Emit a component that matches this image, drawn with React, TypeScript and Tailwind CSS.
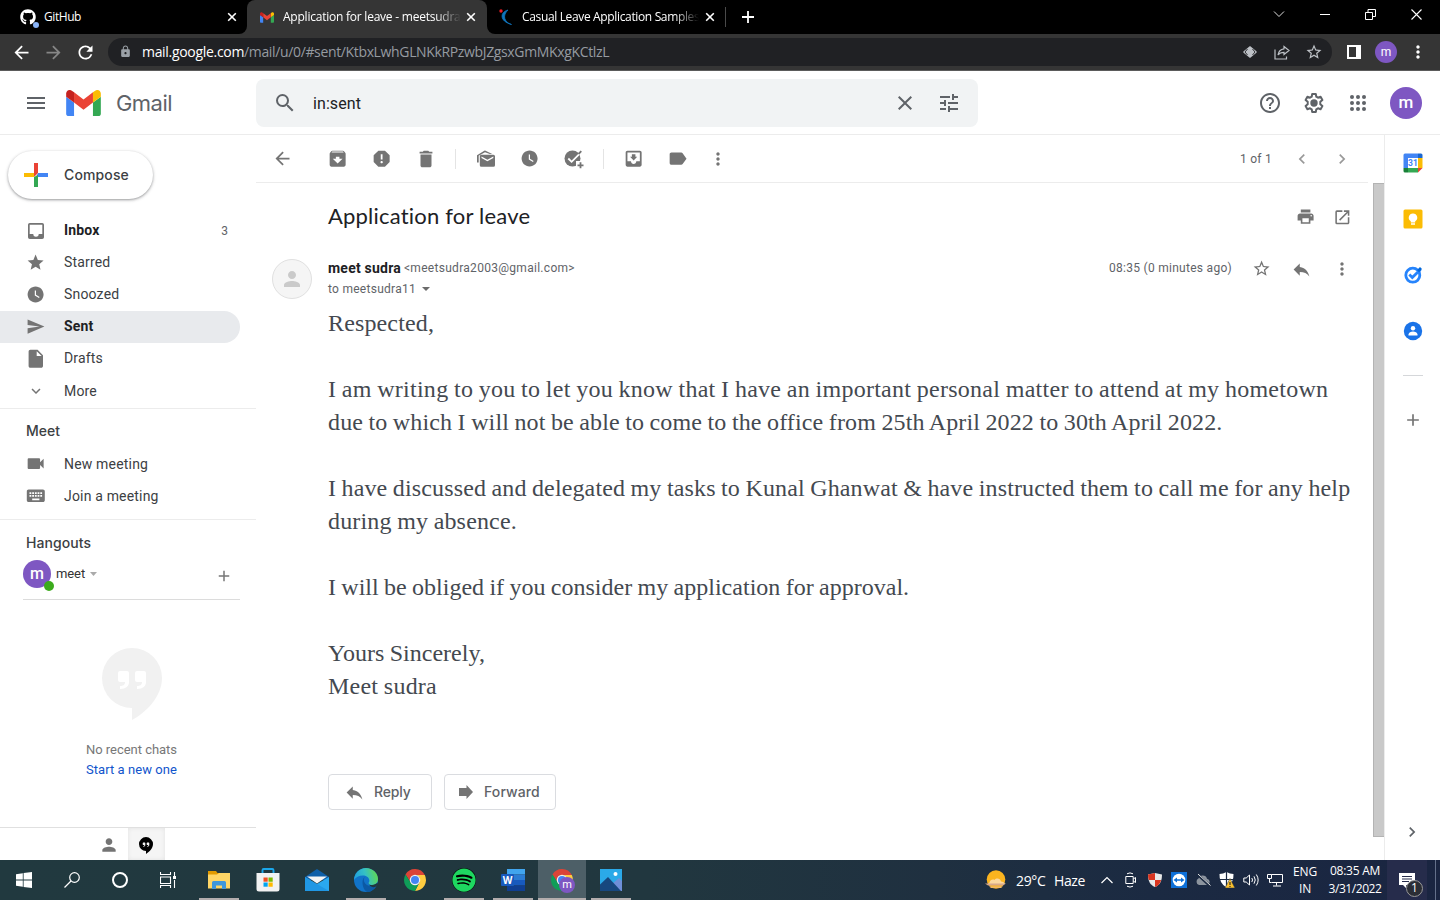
import type { ReactNode } from "react";
import {
  MdAdd, MdArchive, MdArrowBack, MdArrowDropDown, MdArrowForward, MdChevronLeft, MdChevronRight,
  MdClose, MdDelete, MdExpandMore, MdHelpOutline, MdInsertDriveFile, MdKeyboard, MdLabel, MdLock,
  MdMenu, MdMoreVert, MdMoveToInbox, MdOpenInNew, MdPerson, MdPrint, MdRefresh, MdReply, MdReport,
  MdSearch, MdSend, MdStar, MdStarBorder, MdTune, MdVideocam, MdWatchLater,
} from "react-icons/md";
import { FaGithub, FaSpotify } from "react-icons/fa";

const SEGOE = "font-['Open_Sans','Noto_Sans',sans-serif]";
const ROBOTO = "font-['Roboto',sans-serif]";
const PRODUCT = "font-['Inter',sans-serif]";

function Cell({ className = "", children }: { className?: string; children?: ReactNode }) {
  return <div className={`flex shrink-0 items-center justify-center ${className}`}>{children}</div>;
}

function GmailLogo({ className }: { className: string }) {
  return (
    <svg viewBox="52 42 88 66" className={className}>
      <path fill="#4285f4" d="M58 108h14V74L52 59v43c0 3.32 2.69 6 6 6" />
      <path fill="#34a853" d="M120 108h14c3.32 0 6-2.69 6-6V59l-20 15" />
      <path fill="#fbbc04" d="M120 48v26l20-15v-8c0-7.42-8.47-11.65-14.4-7.2" />
      <path fill="#ea4335" d="M72 74V48l24 18 24-18v26L96 92" />
      <path fill="#c5221f" d="M52 51v8l20 15V48l-5.6-4.2c-5.94-4.45-14.4-.22-14.4 7.2" />
    </svg>
  );
}

function ChromeLogo({ className }: { className: string }) {
  return (
    <svg viewBox="0 0 48 48" className={className}>
      <path fill="#db4437" d="M4.95 13A22 22 0 0 1 43.6 14H24A10 10 0 0 0 15.34 29Z" />
      <path fill="#ffcd40" d="M43.6 14A22 22 0 0 1 24 46L32.66 29A10 10 0 0 0 24 14Z" />
      <path fill="#0f9d58" d="M24 46A22 22 0 0 1 4.95 13L15.34 29A10 10 0 0 0 32.66 29Z" />
      <circle cx="24" cy="24" r="10.5" fill="#f1f1f1" />
      <circle cx="24" cy="24" r="8" fill="#4285f4" />
    </svg>
  );
}

function HangoutsMark({ className, fill, quote }: { className: string; fill: string; quote: string }) {
  return (
    <svg viewBox="0 0 60 72" className={className}>
      <path fill={fill} d="M30 0a30 30 0 1 0 0 60v12c15-8 30-24 30-42A30 30 0 0 0 30 0z" />
      <path fill={quote} d="M18 23h7a2 2 0 0 1 2 2v9c0 4-3 7-9 7v-3c3 0 5-1 5-4h-5a2 2 0 0 1-2-2v-7a2 2 0 0 1 2-2zM35 23h7a2 2 0 0 1 2 2v9c0 4-3 7-9 7v-3c3 0 5-1 5-4h-5a2 2 0 0 1-2-2v-7a2 2 0 0 1 2-2z" />
    </svg>
  );
}

function TabClose() {
  return (
    <svg viewBox="0 0 10 10" className="size-[10px] shrink-0">
      <path d="M1.2 1.2l7.6 7.6M8.8 1.2l-7.6 7.6" stroke="#fff" strokeWidth="1.6" />
    </svg>
  );
}

function TabStrip() {
  return (
    <div className={`flex h-[34px] bg-black text-[12px] leading-[34px] text-white ${SEGOE}`}>
      <div className="flex w-[239px] items-center pl-5 pr-[2px]">
        <div className="relative mr-2 size-4">
          <FaGithub className="size-4" />
          <span className="absolute left-[13px] top-[13px] size-[6px] rounded-full bg-[#8ab4f8]" />
        </div>
        <span className="flex-1 tracking-[-0.43px]">GitHub</span>
        <TabClose />
      </div>
      <div className="flex w-2 items-end">
        <div className="size-2 bg-[#353535]">
          <div className="size-2 rounded-br-lg bg-black" />
        </div>
      </div>
      <div className="flex w-[240px] items-center rounded-t-lg bg-[#353535] pl-[13px] pr-[11px]">
        <GmailLogo className="mr-[9px] h-[11px] w-[14px] shrink-0" />
        <span className="mr-[3px] w-[180px] whitespace-nowrap tracking-[-0.23px] [mask-image:linear-gradient(to_right,#000_152px,transparent_178px)]">
          Application for leave - meetsudra
        </span>
        <TabClose />
      </div>
      <div className="flex w-2 items-end">
        <div className="size-2 bg-[#353535]">
          <div className="size-2 rounded-bl-lg bg-black" />
        </div>
      </div>
      <div className="flex w-[231px] items-center pl-1">
        <svg viewBox="0 0 14 16" className="mr-[9px] h-4 w-[14px] shrink-0">
          <path d="M9 1C1 3 0 12 12.500 15.500C4.500 13 3.500 6 9 1z" fill="#0f75bd" stroke="#0f75bd" strokeWidth=".8" />
          <circle cx="2" cy="2" r="1.700" fill="#ed1c24" />
        </svg>
        <span className="mr-[3px] w-[180px] whitespace-nowrap tracking-[-0.35px] [mask-image:linear-gradient(to_right,#000_152px,transparent_177px)]">
          Casual Leave Application Samples
        </span>
        <TabClose />
        <div className="ml-[10px] h-5 w-px shrink-0 bg-[#4a4a4a]" />
      </div>
      <Cell className="w-[44px]">
        <svg viewBox="0 0 12 12" className="size-3">
          <path d="M6 0v12M0 6h12" stroke="#fff" strokeWidth="1.8" />
        </svg>
      </Cell>
      <div className="flex-1" />
      <Cell className="h-7 w-[46px]">
        <svg viewBox="0 0 12 12" className="size-3" fill="none" stroke="#ddd"><path d="M1 3.500l5 5 5-5" /></svg>
      </Cell>
      <Cell className="h-7 w-[46px]">
        <div className="h-px w-[10px] bg-white" />
      </Cell>
      <Cell className="h-7 w-[46px] pr-px">
        <svg viewBox="0 0 11 11" className="size-[11px]" fill="none" stroke="#fff"><path d="M.5 3.500h7v7h-7zM3 3.500V.5h7.500v7H8" /></svg>
      </Cell>
      <Cell className="h-7 w-[46px] pr-px">
        <svg viewBox="0 0 11 11" className="size-[11px]" fill="none" stroke="#fff" strokeWidth="1.100"><path d="M.5.5l10 10M10.500.5l-10 10" /></svg>
      </Cell>
    </div>
  );
}

function AddressBar() {
  return (
    <div className="flex h-[37px] items-center border-b border-[#5b5b5b] bg-[#353535] pl-[6px] text-white">
      <Cell className="w-8 pr-px"><MdArrowBack className="size-[21px]" /></Cell>
      <Cell className="w-8 pr-px text-[#868686]"><MdArrowForward className="size-[21px]" /></Cell>
      <Cell className="mr-[6px] w-8 pr-px"><MdRefresh className="size-[21px]" /></Cell>
      <div className="flex h-7 w-[1224px] items-center rounded-full bg-[#202124] pl-[10px] pr-[2px] text-[#bdc1c6]">
        <Cell className="mr-2 w-4 pb-px pr-px"><MdLock className="size-[13px] text-[#9aa0a6]" /></Cell>
        <span className={`flex-1 text-[14px] leading-7 tracking-[-0.355px] text-[#969ba1] ${SEGOE}`}>
          <span className="tracking-[-0.31px] text-white">mail.google.com</span>/mail/u/0/#sent/KtbxLwhGLNKkRPzwbJZgsxGmMKxgKCtlzL
        </span>
        <Cell className="w-8">
          <svg viewBox="0 0 14 12" className="h-3 w-[14px]" fill="#bdc1c6">
            <path d="M7 0l5.500 4.500L14 6l-1.500 1.500L7 12 1.500 7.500 0 6l1.500-1.500z" />
            <path d="M4.500 3L2 6l2.500 3M9.500 3L12 6 9.500 9" fill="none" stroke="#202124" strokeWidth=".9" />
          </svg>
        </Cell>
        <Cell className="w-8">
          <svg viewBox="0 0 16 15" className="h-[15px] w-4" fill="none" stroke="#bdc1c6" strokeWidth="1.200">
            <path d="M1 4.500v9.500h11.500v-2.500M10 1.500l5 4-5 4V7.300c-3 0-4.600.8-6 2.700.5-3.500 2.500-5.800 6-6.200z" />
          </svg>
        </Cell>
        <Cell className="w-8"><MdStarBorder className="size-[18px]" /></Cell>
      </div>
      <Cell className="ml-[6px] w-8">
        <div className="h-[14px] w-[14px] border-2 border-r-[5px] border-white" />
      </Cell>
      <Cell className="w-8">
        <div className={`flex size-[22px] items-center justify-center rounded-full bg-[#7e57c2] pb-px text-[12px] leading-none ${ROBOTO}`}>m</div>
      </Cell>
      <Cell className="w-8"><MdMoreVert className="size-5" /></Cell>
    </div>
  );
}

function GmailHeader() {
  return (
    <div className="flex h-16 items-center border-b border-[#ececec] text-[#5f6368]">
      <Cell className="ml-3 w-12"><MdMenu className="size-6" /></Cell>
      <GmailLogo className="ml-[6px] mr-[15px] h-[26px] w-[35px]" />
      <span className={`w-[140px] pt-[2px] text-[22px] tracking-[-0.54px] ${PRODUCT}`}>Gmail</span>
      <div className="flex h-12 w-[722px] items-center rounded-lg bg-[#f1f3f4]">
        <Cell className="w-[57px]"><MdSearch className="size-6" /></Cell>
        <span className={`flex-1 pt-[2px] text-[16px] tracking-[0.08px] text-[#202124] ${ROBOTO}`}>in:sent</span>
        <Cell className="w-11"><MdClose className="size-6" /></Cell>
        <Cell className="mr-[7px] w-11"><MdTune className="size-6" /></Cell>
      </div>
      <Cell className="ml-[270px] w-11"><MdHelpOutline className="size-6" /></Cell>
      <Cell className="w-11">
        <svg viewBox="0 0 24 24" className="size-6">
          <path fill="none" stroke="#5f6368" strokeWidth="2" strokeLinejoin="round" d="M10.200 3h3.600l.5 2.700 1.700 1 2.600-.9 1.800 3.100-2.100 1.800v2.600l2.100 1.800-1.800 3.100-2.600-.9-1.700 1-.5 2.700h-3.600l-.5-2.700-1.700-1-2.600.9-1.800-3.100 2.100-1.800v-2.600L3.600 8.900l1.800-3.100 2.600.9 1.700-1z" />
          <circle cx="12" cy="12" r="3.700" fill="#5f6368" />
        </svg>
      </Cell>
      <Cell className="w-11">
        <svg viewBox="0 0 16 16" className="size-4" fill="#5f6368">
          {[2, 8, 14].map((y) => [2, 8, 14].map((x) => <circle key={`${x}-${y}`} cx={x} cy={y} r="2" />))}
        </svg>
      </Cell>
      <Cell className="ml-[10px] w-8">
        <div className={`flex size-8 items-center justify-center rounded-full bg-[#7e57c2] pb-px text-[17px] font-medium leading-none text-white ${ROBOTO}`}>m</div>
      </Cell>
    </div>
  );
}

function NavItem({ icon, label, count, active, bold, low }: { icon: ReactNode; label: string; count?: string; active?: boolean; bold?: boolean; low?: boolean }) {
  return (
    <div className={`mr-4 flex h-8 items-center rounded-r-full pl-[26px] pr-3 text-[14px] ${active ? "bg-[#e8eaed]" : ""} ${bold ? "font-bold text-[#202124]" : "text-[#3c4043]"}`}>
      <Cell className="mr-[18px] w-5 text-[#747474]">{icon}</Cell>
      <span className={`flex-1 leading-5 tracking-[0.18px] ${low ? "" : "pb-[2px]"}`}>{label}</span>
      {count && <span className="text-[12px] font-normal text-[#5f6368]">{count}</span>}
    </div>
  );
}

function Sidebar() {
  return (
    <div className={`flex w-64 flex-col ${ROBOTO}`}>
      <div className={`ml-2 mt-4 flex h-12 w-[145px] shrink-0 items-center rounded-full bg-white pl-4 text-[14px] font-medium tracking-[0.13px] text-[#3c4043] shadow-[0_1px_2px_rgba(60,64,67,.35),0_1px_3px_1px_rgba(60,64,67,.16)] ${PRODUCT}`}>
        <svg viewBox="0 0 24 24" className="mr-4 size-6">
          <path fill="#ea4335" d="M10 0h4v10l-4 4z" />
          <path fill="#fbbc04" d="M0 10h10v4H0z" />
          <path fill="#4285f4" d="M14 10h10v4H12z" />
          <path fill="#34a853" d="M10 14l4-2v12h-4z" />
        </svg>
        <span className="pb-[2px]">Compose</span>
      </div>
      <div className="mt-4">
        <NavItem bold label="Inbox" count="3" icon={
          <svg viewBox="0 0 16 16" className="size-4" fill="currentColor"><path fillRule="evenodd" d="M1.800 0h12.400A1.800 1.800 0 0 1 16 1.800v12.400a1.800 1.800 0 0 1-1.800 1.800H1.800A1.800 1.800 0 0 1 0 14.200V1.800A1.800 1.800 0 0 1 1.800 0zM1.700 1.700v9.300h3.600a2.700 2.700 0 0 0 5.400 0h3.600V1.700z" /></svg>
        } />
        <NavItem label="Starred" icon={<MdStar className="size-[19.2px]" />} />
        <NavItem label="Snoozed" icon={<MdWatchLater className="size-[19.2px]" />} />
        <NavItem bold active label="Sent" icon={<MdSend className="size-[19.2px]" />} />
        <NavItem label="Drafts" icon={<MdInsertDriveFile className="size-[21.6px] shrink-0" />} />
        <NavItem low label="More" icon={<MdExpandMore className="size-[18px]" />} />
      </div>
      <div className="mt-px border-t border-[#ececec] pt-3">
        <div className={`mb-[7px] pl-[26px] text-[14px] font-medium leading-5 text-[#3c4043] ${PRODUCT}`}>Meet</div>
        <NavItem low label="New meeting" icon={<MdVideocam className="size-[21.3px] shrink-0" />} />
        <NavItem low label="Join a meeting" icon={<MdKeyboard className="size-[21.6px] shrink-0" />} />
      </div>
      <div className="mt-[7px] border-t border-[#ececec] pt-[13px]">
        <div className={`pl-[26px] text-[14px] font-medium leading-5 tracking-[0.06px] text-[#3c4043] ${PRODUCT}`}>Hangouts</div>
        <div className="ml-[23px] mr-4 mt-[7px] flex h-10 items-start border-b border-[#dcdcdc]">
          <div className="relative flex size-7 items-center justify-center rounded-full bg-[#7e57c2] pb-px text-[16px] font-medium leading-none text-white">
            m
            <span className="absolute left-[21px] top-[21px] size-[10px] rounded-full bg-[#3cab1c]" />
          </div>
          <span className="ml-[5px] text-[13px] leading-7 tracking-[-0.1px] text-[#333]">meet</span>
          <svg viewBox="0 0 7 4" className="ml-[5px] mt-3 h-1 w-[7px]" fill="#aaa"><path d="M0 0h7L3.500 4z" /></svg>
          <div className="flex-1" />
          <MdAdd className="mr-[7px] mt-[7px] size-[18px] text-[#777]" />
        </div>
      </div>
      <div className="mt-12 flex flex-1 flex-col items-center">
        <HangoutsMark className="ml-[8px] h-[72px] w-[60px]" fill="#f1f1f1" quote="#fff" />
        <div className="ml-[7px] mt-5 text-center text-[13px] leading-5 text-[#777]">
          <div className="tracking-[-0.03px]">No recent chats</div>
          <div className="tracking-[0.06px] text-[#15c]">Start a new one</div>
        </div>
      </div>
      <div className="flex h-[33px] shrink-0 border-t border-[#e0e0e0] pl-[91px]">
        <Cell className="w-[37px] pr-px pt-[2px]"><MdPerson className="size-5 text-[#747474]" /></Cell>
        <Cell className="w-[37px] bg-[#f5f5f5] pr-px pt-[2px] shadow-[inset_0_0_4px_#e2e2e2]">
          <HangoutsMark className="h-[17px] w-[14px]" fill="#000" quote="#f5f5f5" />
        </Cell>
      </div>
    </div>
  );
}

function MailToolbar() {
  return (
    <div className={`mr-4 flex h-12 items-center border-b border-[#ececec] pl-1 text-[#747474] ${ROBOTO}`}>
      <Cell className="mr-3 w-11"><MdArrowBack className="size-[21px]" /></Cell>
      <Cell className="w-11"><MdArchive className="size-[21.3px]" /></Cell>
      <Cell className="w-11"><MdReport className="size-[21.3px]" /></Cell>
      <Cell className="w-11"><MdDelete className="size-[22px]" /></Cell>
      <Cell className="w-4 pr-px"><div className="h-5 w-px bg-[#e4e4e4]" /></Cell>
      <Cell className="w-11">
        <svg viewBox="0 0 18 18" className="size-[18px]" fill="currentColor">
          <path d="M0 12.500V5.300L7.300.8a1.300 1.300 0 0 1 1.300 0L15.200 4H12.800L8 2.300 1.700 5.800v6.700z" />
          <path fillRule="evenodd" d="M4.400 4.700h12a1.600 1.600 0 0 1 1.600 1.600v8.900a1.600 1.600 0 0 1-1.600 1.600h-12a1.600 1.600 0 0 1-1.600-1.600V6.300a1.600 1.600 0 0 1 1.600-1.600zM4.500 6.500v1.400l5.900 3.400 5.900-3.400V6.500l-5.900 3.300z" />
        </svg>
      </Cell>
      <Cell className="w-11"><MdWatchLater className="size-[19.2px]" /></Cell>
      <Cell className="w-11">
        <svg viewBox="0 0 20 20" className="size-5">
          <circle cx="8.500" cy="9.500" r="8" fill="currentColor" />
          <path d="M4.300 9.500l3.300 3.300L17 3.300" fill="none" stroke="#fff" strokeWidth="1.800" />
          <path d="M12 12h8v8h-8z" fill="#fff" />
          <path d="M14.500 5l2.800-2.800M16.500 13.300v6M13.500 16.300h6" fill="none" stroke="currentColor" strokeWidth="1.800" />
        </svg>
      </Cell>
      <Cell className="w-4 pr-px"><div className="h-5 w-px bg-[#e4e4e4]" /></Cell>
      <Cell className="w-11"><MdMoveToInbox className="size-[21.3px]" /></Cell>
      <Cell className="w-11"><MdLabel className="size-[21.3px]" /></Cell>
      <Cell className="w-9"><MdMoreVert className="size-5" /></Cell>
      <div className="flex-1" />
      <span className="mr-[10px] text-[12px] tracking-[0.25px] text-[#5f6368]">1 of 1</span>
      <Cell className="w-10 text-[#999]"><MdChevronLeft className="size-5" /></Cell>
      <Cell className="mr-[6px] w-10 text-[#999]"><MdChevronRight className="size-5" /></Cell>
    </div>
  );
}

function MessageBody() {
  return (
    <div className="h-[396px] whitespace-nowrap pl-[72px] text-[24px] leading-[33px] text-[#444950] [word-spacing:-0.7px] font-['Liberation_Serif',serif]">
      <p className="mb-[33px] tracking-[0.14px]">Respected,</p>
      <p className="tracking-[0.263px]">I am writing to you to let you know that I have an important personal matter to attend at my hometown</p>
      <p className="mb-[33px] tracking-[0.132px]">due to which I will not be able to come to the office from 25th April 2022 to 30th April 2022.</p>
      <p className="tracking-[0.135px]">I have discussed and delegated my tasks to Kunal Ghanwat &amp; have instructed them to call me for any help</p>
      <p className="mb-[33px] tracking-[0.17px]">during my absence.</p>
      <p className="mb-[33px] tracking-[0.015px]">I will be obliged if you consider my application for approval.</p>
      <p className="tracking-[0.02px]">Yours Sincerely,</p>
      <p className="tracking-[0.24px]">Meet sudra</p>
    </div>
  );
}

function Message() {
  return (
    <div className="flex flex-1 justify-between">
      <div className={`flex-1 pl-4 ${ROBOTO}`}>
        <div className="mt-5 flex h-7 items-center pl-14 text-[#747474]">
          <span className="flex-1 pb-[3px] text-[22px] tracking-[0.2px] text-[#202124] font-['Lato',sans-serif]">Application for leave</span>
          <Cell className="w-9"><MdPrint className="size-[19.2px]" /></Cell>
          <Cell className="mr-[13px] w-9"><MdOpenInNew className="size-[18.7px]" /></Cell>
        </div>
        <div className="mt-[27px] flex h-[49px] items-start">
          <div className="mr-4 mt-px flex size-10 items-center justify-center rounded-full border border-[#e0e0e0] bg-[#f5f5f5]">
            <MdPerson className="size-6 text-[#cacaca]" />
          </div>
          <div className="flex-1 text-[12px] leading-5 text-[#5f6368]">
            <div className="flex h-[21px]">
              <span className="mr-[3px] text-[14px] font-bold tracking-[0.22px] text-[#202124]">meet sudra</span>
              <span className="tracking-[0.29px]">&lt;meetsudra2003@gmail.com&gt;</span>
            </div>
            <div className="flex items-center">
              <span className="tracking-[0.27px]">to meetsudra11</span>
              <svg viewBox="0 0 8 4" className="ml-[6px] h-1 w-2" fill="#6b6b6b"><path d="M0 0h8L4 4z" /></svg>
            </div>
          </div>
          <div className="mr-[13px] flex h-5 items-center text-[#747474]">
            <span className="mr-3 text-[12px] tracking-[0.28px] text-[#5f6368]">08:35 (0 minutes ago)</span>
            <Cell className="w-9 pt-[2px]"><MdStarBorder className="size-[19.2px]" /></Cell>
            <Cell className="w-11 pr-px pt-[2px]"><MdReply className="size-[21px]" /></Cell>
            <Cell className="w-9 pt-[2px]"><MdMoreVert className="size-5" /></Cell>
          </div>
        </div>
        <div className="-ml-4"><MessageBody /></div>
        <div className={`ml-14 mt-[71px] flex gap-3 text-[14px] font-medium text-[#5f6368] ${PRODUCT}`}>
          <div className="flex h-9 w-[104px] items-center rounded border border-[#dadce0] pl-[15px]">
            <MdReply className="mr-[9px] size-[21px] text-[#747474]" />
            <span className="pb-[2px] tracking-[-0.15px]">Reply</span>
          </div>
          <div className="flex h-9 w-28 items-center rounded border border-[#dadce0] pl-[14px]">
            <svg viewBox="0 0 14 14" className="mr-[11px] h-[14px] w-[14px]" fill="#747474"><path d="M0 3h7.500V0L14 7l-6.500 7v-3H0z" /></svg>
            <span className="pb-[2px] tracking-[0.1px]">Forward</span>
          </div>
        </div>
      </div>
      <div className="h-[654px] w-[11px] border border-r-0 border-[#b3b3b3] bg-[#c9c9c9]" />
    </div>
  );
}

function SidePanel() {
  return (
    <div className="flex w-14 flex-col items-center border-l border-[#ececec] pt-[18px] text-[#747474]">
      <svg viewBox="0 0 20 20" className="size-5">
        <path fill="#4285f4" d="M2 .5h13v4.500H5v10H.5V2A1.500 1.500 0 0 1 2 .5z" />
        <path fill="#1967d2" d="M15 .5h3A1.500 1.500 0 0 1 19.500 2v3H15z" />
        <path fill="#fbbc04" d="M15 5h4.500v10H15z" />
        <path fill="#34a853" d="M5 15h10v4.500H5z" />
        <path fill="#188038" d="M.5 15H5v4.500H2A1.500 1.500 0 0 1 .5 18z" />
        <path fill="#ea4335" d="M15 15h4.500L15 19.500z" />
        <path fill="#fff" d="M5 5h10v10H5z" />
        <text x="10" y="13.200" fontSize="8.500" fontWeight="700" fill="#4285f4" textAnchor="middle" fontFamily="Roboto, sans-serif">31</text>
      </svg>
      <svg viewBox="0 0 20 20" className="mt-9 size-5">
        <rect x=".5" y=".5" width="19" height="19" rx="1.500" fill="#fbbc04" />
        <path fill="#fff" d="M10 4.500a4.200 4.200 0 0 0-2.200 7.800V13.500h4.400v-1.200A4.200 4.200 0 0 0 10 4.500zM8 14.300h4v1.400H8z" />
      </svg>
      <svg viewBox="0 0 20 20" className="mt-9 size-5">
        <circle cx="9.800" cy="10.200" r="7" fill="none" stroke="#2684fc" strokeWidth="2.800" />
        <path d="M6.300 9.500l3 3L17.500 4.400" fill="none" stroke="#2684fc" strokeWidth="2.800" />
        <path d="M14 5.100l3-3 2 2-3 3.200z" fill="#0066da" />
      </svg>
      <svg viewBox="0 0 20 20" className="mt-9 size-5">
        <circle cx="10" cy="10" r="9.200" fill="#1a73e8" />
        <circle cx="10" cy="7.200" r="2.200" fill="#fff" />
        <path fill="#fff" d="M5.500 14.500v-1c0-2 2.500-3 4.500-3s4.500 1 4.500 3v1z" />
      </svg>
      <div className="mt-[34px] h-px w-5 bg-[#d5d7da]" />
      <MdAdd className="mt-[34px] size-5" />
      <div className="flex-1" />
      <MdChevronRight className="mb-[18px] mr-[2px] size-5 text-[#5f6368]" />
    </div>
  );
}

function TaskApp({ open, active, children }: { open?: boolean; active?: boolean; children: ReactNode }) {
  return (
    <div className={`flex flex-col items-center ${active ? "ml-px w-12 bg-[#4d5f67]" : "w-[49px]"}`}>
      <Cell className="h-[38px] pt-[2px]">{children}</Cell>
      {(open || active) && <div className={`h-[2px] bg-[#b3adad] ${active ? "w-full" : "w-10"}`} />}
    </div>
  );
}

function Taskbar() {
  return (
    <div className={`flex h-10 shrink-0 bg-[linear-gradient(to_right,#21393f_0%,#21373f_45%,#1f3040_65%,#1b2a42_80%,#1a2541_100%)] text-white ${SEGOE}`}>
      <Cell className="w-12">
        <svg viewBox="0 0 16 16" className="size-4" fill="#fff"><path d="M0 2.200L6.800 1.200v6.400H0zM7.600 1.100L16 0v7.600H7.600zM0 8.400h6.800v6.400L0 13.800zM7.600 8.400H16V16l-8.400-1.100z" /></svg>
      </Cell>
      <Cell className="w-12">
        <svg viewBox="0 0 16 16" className="size-4" fill="none" stroke="#fff" strokeWidth="1.200"><circle cx="10.500" cy="5.500" r="4.800" /><path d="M7 9L.5 15.500" /></svg>
      </Cell>
      <Cell className="w-12"><div className="size-4 rounded-full border-2 border-white" /></Cell>
      <Cell className="mr-[2px] w-12">
        <svg viewBox="0 0 16 16" className="size-4" fill="none" stroke="#fff" strokeWidth="1.100"><path d="M.5 0v2.500h10V0M.5 5h10v6.500H.5zM.5 16v-2.500h10V16M14.500 0v4M14.500 8v8" /><path d="M13 4h3v3h-3z" fill="#fff" stroke="none" /></svg>
      </Cell>
      <TaskApp open>
        <svg viewBox="0 0 22 18" className="h-[18px] w-[22px]">
          <path fill="#e19a00" d="M0 0h8l1.500 2H22v3H0z" />
          <path fill="#ffd666" d="M0 3.500h9l2-1.500h11v15.500H0z" />
          <path fill="#3f97dc" d="M4 18v-6.500A1.500 1.500 0 0 1 5.500 10h11a1.500 1.500 0 0 1 1.500 1.500V18h-4v-3.500H8V18z" />
        </svg>
      </TaskApp>
      <TaskApp>
        <svg viewBox="0 0 24 24" className="size-6">
          <path d="M6.500 6V2.200A1.200 1.200 0 0 1 7.700 1h8.600a1.200 1.200 0 0 1 1.200 1.200V6" fill="none" stroke="#1ba7ea" strokeWidth="1.900" />
          <path fill="#f2f2f2" d="M.5 5h23v16a2.500 2.500 0 0 1-2.500 2.500H3A2.500 2.500 0 0 1 .5 21z" />
          <path fill="#f25022" d="M7.500 9.500h4.200v4.200H7.500z" /><path fill="#7fba00" d="M12.500 9.500h4.200v4.200h-4.200z" />
          <path fill="#00a4ef" d="M7.500 14.500h4.200v4.200H7.500z" /><path fill="#ffb900" d="M12.500 14.500h4.200v4.200h-4.200z" />
        </svg>
      </TaskApp>
      <TaskApp>
        <svg viewBox="0 0 24 22" className="h-[22px] w-6">
          <path fill="#0f5fa8" d="M0 8L12 0l12 8v3H0z" />
          <path fill="#2aa8ef" d="M0 8l12 7L24 8v14H0z" /><path fill="#f4f4f4" d="M2 7.500h20L12 14.500z" />
          <path fill="#1483d8" d="M24 22L8 12.700 0 8v14z" opacity=".45" />
        </svg>
      </TaskApp>
      <TaskApp open>
        <svg viewBox="0 0 24 24" className="size-6">
          <defs>
            <linearGradient id="edgeTop" x1="0" y1=".6" x2="1" y2=".4"><stop offset="0" stopColor="#1f9fe0" /><stop offset=".5" stopColor="#35c1c4" /><stop offset="1" stopColor="#62d84e" /></linearGradient>
          </defs>
          <circle cx="12" cy="12" r="12" fill="#1173c9" />
          <path fill="url(#edgeTop)" d="M0 12C.3 5 5.500 0 12 0s12 5 12 11c0 4-3 6-6 6-2.500 0-4-1-3.500-2 .8-1 1-2 .8-3C14.800 9 12 7.500 9 7.500 5 7.500 1.500 9.500 0 12z" />
          <path fill="#0c59a4" d="M8.500 14c0-3 1.500-5 3.500-5.500-3 1-3 6 1 8.500 3 1.800 6.500 1.500 9.500-.1C20.500 21.500 16.500 24 13.500 24c-3-1-5-5-5-10z" />
          <path fill="#21373f" d="M14.500 15c-.5 1 1 2 3.500 2 2 0 4-.9 5.100-2.200l1 1.200-2 2.500c-3.500 1.600-7.100.1-7.600-3.500z" />
        </svg>
      </TaskApp>
      <TaskApp><ChromeLogo className="size-6" /></TaskApp>
      <TaskApp open>
        <div className="flex size-6 items-center justify-center rounded-full bg-black"><FaSpotify className="size-6 text-[#1ed760]" /></div>
      </TaskApp>
      <TaskApp open>
        <svg viewBox="0 0 24 22" className="h-[22px] w-6">
          <path fill="#41a5ee" d="M6 0h18v5.500H6z" /><path fill="#2b7cd3" d="M6 5.500h18V11H6z" /><path fill="#185abd" d="M6 11h18v5.500H6z" /><path fill="#103f91" d="M6 16.500h18V22H6z" />
          <rect y="5" width="13" height="12" rx="1" fill="#185abd" />
          <text x="6.500" y="14.500" fontSize="10" fontWeight="700" fill="#fff" textAnchor="middle" fontFamily="Open Sans, sans-serif">W</text>
        </svg>
      </TaskApp>
      <TaskApp active>
        <div className="relative">
          <ChromeLogo className="size-6" />
          <div className={`absolute left-[9px] top-[9px] flex size-4 items-center justify-center rounded-full bg-[#7e57c2] pb-px text-[11px] leading-none ${ROBOTO}`}>m</div>
        </div>
      </TaskApp>
      <TaskApp open>
        <svg viewBox="0 0 22 22" className="size-[22px]">
          <path fill="#2ba9e8" d="M0 0h22v22H0z" /><path fill="#6f8fd8" d="M12 15l7-6 3 3v10H12z" /><path fill="#17487f" d="M0 15.500L8 8l13 14H0z" /><circle cx="15.500" cy="5" r="2" fill="#fff" />
        </svg>
      </TaskApp>
      <div className="flex-1" />
      <Cell className="mr-[9px] w-[22px]">
        <svg viewBox="0 0 22 20" className="h-5 w-[22px]">
          <circle cx="11" cy="9.500" r="9.300" fill="#fbb41f" />
          <path fill="#fcd9a0" d="M4.500 12.500c.5-2.500 3-3.500 5-2.500 2-2.500 6-1.500 6.500 1.500 2 0 3.500 1 4 2.500H3z" />
          <path fill="#d9a98a" d="M0 13.500h21l-3 2H3z" /><path fill="#f0b76a" d="M4 16.500h14l-2 1.500H6z" />
        </svg>
      </Cell>
      <span className="w-[38px] pt-px text-[14px] leading-10 tracking-[-0.35px]">29°C</span>
      <span className="mr-px w-10 pt-px text-[14px] leading-10 tracking-[-0.38px]">Haze</span>
      <Cell className="w-6">
        <svg viewBox="0 0 12 8" className="h-2 w-3" fill="none" stroke="#fff" strokeWidth="1.200"><path d="M.5 7L6 1.500 11.500 7" /></svg>
      </Cell>
      <Cell className="w-6">
        <svg viewBox="0 0 12 16" className="h-4 w-3" fill="none" stroke="#fff"><path d="M.8 4.500h7.400v7H.8zM8.200 7l2.300-1.500v5L8.200 9M2 1.800Q5 0 8 1.800M2 14.200Q5 16 8 14.200" /></svg>
      </Cell>
      <Cell className="w-6">
        <svg viewBox="0 0 14 14" className="size-[14px]">
          <path fill="#e8e8e8" d="M0 1.500L7 0l7 1.500C14 8 12 12 7 14 2 12 0 8 0 1.500z" /><path fill="#d8341f" d="M0 1.500L7 0v7H.9A16 16 0 0 1 0 1.500zM7 7h6.100c-.9 3.500-3 6-6.100 7z" />
        </svg>
      </Cell>
      <Cell className="w-6">
        <svg viewBox="0 0 16 16" className="size-4">
          <path fill="#0e70d8" d="M0 0h16v16H0z" /><circle cx="8" cy="8" r="6.300" fill="#fff" /><path fill="#0e70d8" d="M2.500 8L6 5.500v1.700h4V5.500L13.500 8 10 10.500V8.800H6v1.700z" />
        </svg>
      </Cell>
      <Cell className="w-6">
        <svg viewBox="0 0 16 12" className="h-3 w-4">
          <path fill="#8c949e" d="M4 11a3.500 3.500 0 0 1-.5-6.500A4.500 4.500 0 0 1 12 4.800 3.200 3.200 0 0 1 12.500 11z" />
          <path d="M2 0l13 12" stroke="#1b2a42" strokeWidth="2.600" /><path d="M3 0l12.500 11.500" stroke="#e6e6e6" strokeWidth="1" />
        </svg>
      </Cell>
      <Cell className="w-6">
        <svg viewBox="0 0 16 16" className="size-4">
          <path fill="#fff" d="M.5 2Q4 2 7.500 0 11 2 14.500 2 15 11 7.500 15.500 0 11 .5 2z" /><path d="M7.500 0v15.500M0 7.500h15" stroke="#1b2a42" strokeWidth="1.200" />
          <path fill="#fbc02d" d="M11 6.500L16 16H6z" stroke="#1b2a42" strokeWidth=".5" /><path d="M11 10v3M11 14v1" stroke="#222" strokeWidth="1.100" />
        </svg>
      </Cell>
      <Cell className="w-6">
        <svg viewBox="0 0 17 14" className="h-[14px] w-[17px]" fill="none" stroke="#fff"><path d="M.8 5h2.400L6.500 2v10L3.200 9H.8zM8.800 5Q10.300 7 8.800 9M11 3.300Q13.500 7 11 10.700M13.300 1.500Q17 7 13.300 12.500" /></svg>
      </Cell>
      <Cell className="w-6">
        <svg viewBox="0 0 16 14" className="h-[14px] w-4" fill="none" stroke="#fff"><path d="M4.500 1.500h11v8h-11M.5 1.500h4v4h-4zM2.500 5.500v4h2M9.500 9.500v3M6 13h8" /></svg>
      </Cell>
      <div className="mt-[3px] w-9 text-center text-[12px] leading-[17px] tracking-[-0.15px]">
        <div>ENG</div>
        <div>IN</div>
      </div>
      <div className="mt-[2px] flex w-[64px] flex-col items-center text-[12px] leading-[18px]">
        <div className="tracking-[-0.26px]">08:35 AM</div>
        <div className="tracking-[-0.43px]">3/31/2022</div>
      </div>
      <div className="mr-2 flex w-10 items-center justify-center bg-[#262c4b]">
        <div className="relative">
          <svg viewBox="0 0 16 15" className="h-[15px] w-4"><path fill="#fff" d="M0 0h16v12H7v3l-3-3H0z" /><path d="M3 3.500h10M3 6h10M3 8.500h7" stroke="#262c4b" strokeWidth="1" /></svg>
          <div className="absolute left-[7px] top-[7px] flex size-[17px] items-center justify-center rounded-full border border-[#999] bg-[#2b2e35] text-[12px] leading-none">1</div>
        </div>
      </div>
      <div className="mr-1 w-px bg-[#64708a]" />
    </div>
  );
}

export default function App() {
  return (
    <div className="flex h-[900px] w-[1440px] flex-col overflow-hidden bg-white">
      <TabStrip />
      <AddressBar />
      <GmailHeader />
      <div className="flex min-h-0 flex-1">
        <Sidebar />
        <div className="flex flex-1 flex-col">
          <MailToolbar />
          <Message />
        </div>
        <SidePanel />
      </div>
      <Taskbar />
    </div>
  );
}
